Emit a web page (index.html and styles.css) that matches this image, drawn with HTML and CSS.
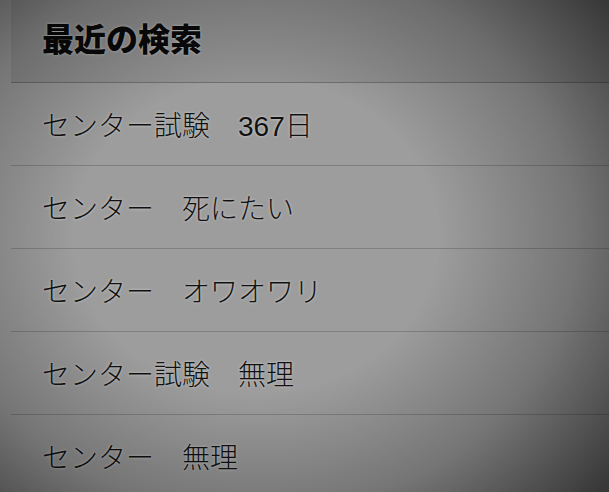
FILE: index.html
```html
<!DOCTYPE html>
<html lang="ja">
<head>
    <meta charset="UTF-8">
    <meta name="viewport" content="width=device-width, initial-scale=1.0">
    <title>最近の検索</title>
    <link rel="stylesheet" href="styles.css">
</head>
<body>
    <div class="recent">
        <h2 class="recent-title">最近の検索</h2>
        <ul class="recent-list">
            <li class="recent-item">センター試験　367日</li>
            <li class="recent-item">センター　死にたい</li>
            <li class="recent-item">センター　オワオワリ</li>
            <li class="recent-item">センター試験　無理</li>
            <li class="recent-item">センター　無理</li>
        </ul>
    </div>
    <div class="shade"></div>
</body>
</html>
```

FILE: styles.css
```css
html, body {
    height: 100%;
}
body {
    margin: 0;
    overflow: hidden;
    background: #9d9d9d;
    font-family: "Liberation Sans", "Noto Sans CJK JP", sans-serif;
    color: #111;
}
.recent {
    margin-left: 11px;
}
.recent-title {
    margin: 0;
    height: 83px;
    box-sizing: border-box;
    padding: 0 0 8px 31px;
    display: flex;
    align-items: center;
    font-size: 32px;
    font-weight: 900;
    color: #0a0a0a;
    background: rgba(0, 0, 0, 0.07);
    border-bottom: 1px solid #6f6f6f;
    text-shadow: 0 0 3px rgba(255, 255, 255, 0.55);
}
.recent-list {
    list-style: none;
    margin: 0;
    padding: 0;
}
.recent-item {
    height: 82px;
    padding-left: 31px;
    display: flex;
    align-items: center;
    font-size: 28px;
    font-weight: 300;
    border-bottom: 1px solid rgba(0, 0, 0, 0.18);
    text-shadow: 0 0 3px rgba(255, 255, 255, 0.6);
}
/* dark edges over the whole page */
.shade {
    position: fixed;
    inset: 0;
    pointer-events: none;
    background: radial-gradient(ellipse 75% 80% at 42% 48%, rgba(0, 0, 0, 0) 40%, rgba(0, 0, 0, 0.25) 70%, rgba(0, 0, 0, 0.65) 100%);
}
```
